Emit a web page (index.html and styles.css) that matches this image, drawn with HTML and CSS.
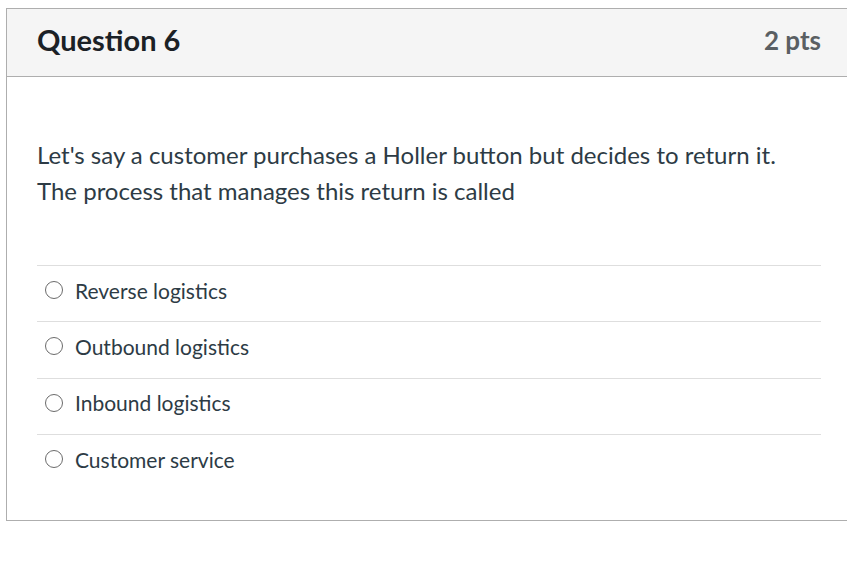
FILE: index.html
```html
<!DOCTYPE html>
<html>
<head>
<meta charset="utf-8">
<link rel="stylesheet" href="styles.css">
</head>
<body>
<div class="card">
  <div class="header">
    <h2 class="title">Question 6</h2>
    <span class="pts">2 pts</span>
  </div>
  <div class="content">
    <p class="prompt">Let's say a customer purchases a Holler button but decides to return it.<br>The process that manages this return is called</p>
    <div class="answers">
      <div class="answer"><span class="radio"></span><span class="label">Reverse logistics</span></div>
      <div class="answer"><span class="radio"></span><span class="label">Outbound logistics</span></div>
      <div class="answer"><span class="radio"></span><span class="label">Inbound logistics</span></div>
      <div class="answer"><span class="radio"></span><span class="label">Customer service</span></div>
    </div>
  </div>
</div>
</body>
</html>
```
FILE: styles.css
```css
html, body {
  margin: 0;
  padding: 0;
  background: #fff;
  overflow: hidden;
}
body {
  padding: 8px 0 0 6px;
  font-family: Lato, "Open Sans", sans-serif;
  color: #2d3b45;
}
.card {
  box-sizing: border-box;
  width: 850px;
  border: 1px solid #aeaeae;
  background: #fff;
}
.header {
  display: flex;
  justify-content: space-between;
  align-items: center;
  height: 68px;
  box-sizing: border-box;
  padding: 0 34px 6px 30px;
  background: #f5f5f5;
  border-bottom: 1px solid #aeaeae;
}
.title {
  margin: 0;
  font-size: 29px;
  font-weight: 700;
  color: #1b2126;
}
.pts {
  font-size: 26px;
  font-weight: 700;
  color: #5a5f63;
}
.content {
  padding: 60px 34px 30px 30px;
}
.prompt {
  margin: 0;
  font-size: 24px;
  line-height: 36px;
  color: #2d3b45;
}
.answers {
  margin-top: 56px;
}
.answer {
  display: flex;
  align-items: center;
  height: 56.33px;
  box-sizing: border-box;
  border-top: 1px solid #dedede;
  padding: 0 0 7px 8px;
}
.radio {
  box-sizing: border-box;
  width: 18px;
  height: 18px;
  border: 1.5px solid #6b6b6b;
  border-radius: 50%;
  margin-right: 12px;
}
.label {
  font-size: 21px;
  color: #2d3b45;
}
```
